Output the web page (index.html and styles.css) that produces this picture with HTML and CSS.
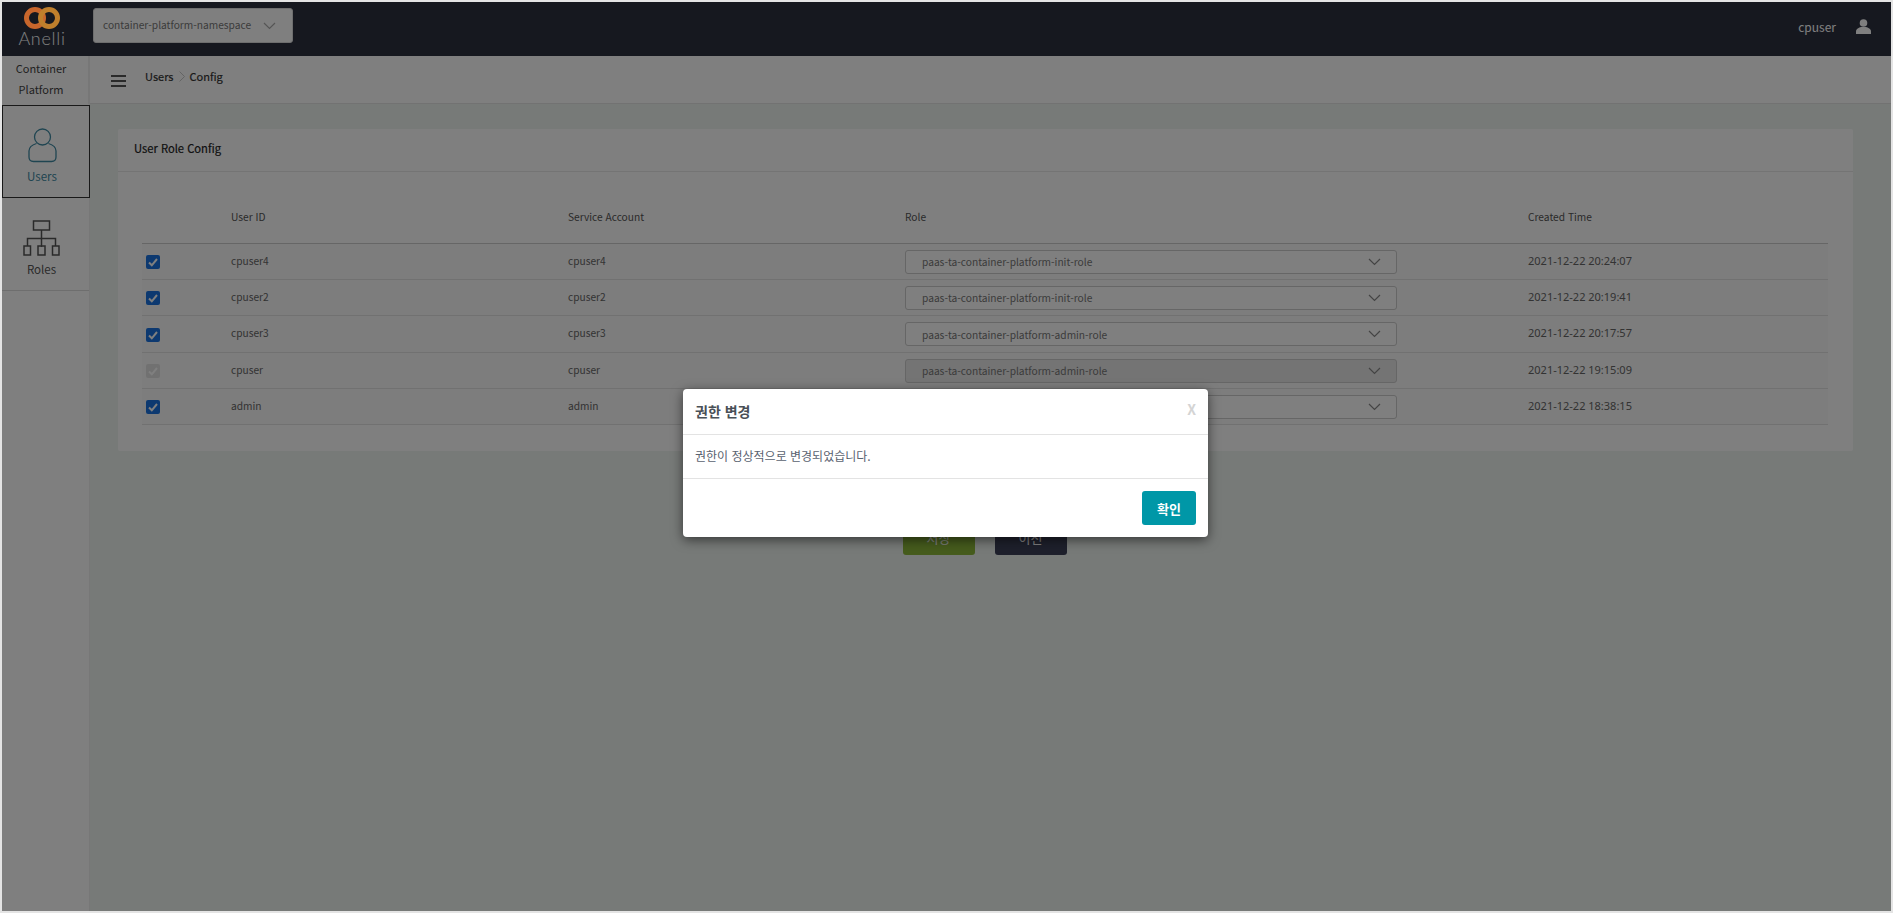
FILE: index.html
```html
<!DOCTYPE html>
<html lang="ko">
<head>
<meta charset="utf-8">
<title>User Role Config</title>
<link rel="stylesheet" href="styles.css">
</head>
<body>
<div class="frame">
  <header class="topbar">
    <div class="logo">
      <svg class="logo-rings" width="36" height="22" viewBox="0 0 36 22"><circle cx="11" cy="11" r="8.500" fill="none" stroke="#c8662c" stroke-width="5"/><circle cx="25" cy="11" r="8.500" fill="none" stroke="#bf7f2c" stroke-width="5"/></svg>
      <span class="logo-text">Anelli</span>
    </div>
    <div class="ns-select"><span>container-platform-namespace</span>
      <svg class="chev" width="13" height="8" viewBox="0 0 13 8"><path d="M1 1l5.500 5.500L12 1" fill="none" stroke="currentColor" stroke-width="1.200"/></svg>
    </div>
    <div class="user-box"><span>cpuser</span>
      <svg width="15" height="15" viewBox="0 0 15 15"><circle cx="7.500" cy="4" r="3.800" fill="#fff"/><path d="M0 15v-2.500C0 10 3 8.500 5 8h5c2 .5 5 2 5 4.500V15z" fill="#fff"/></svg>
    </div>
  </header>
  <div class="body-row">
    <aside class="sidebar">
      <div class="side-title">Container<br>Platform</div>
      <nav class="side-nav">
        <a class="side-item active">
          <svg width="29" height="35" viewBox="0 0 29 35"><circle cx="14.500" cy="9" r="8" fill="none" stroke="currentColor" stroke-width="1.300"/><path d="M8.500 15.500C3.500 17 1 19 1 23v6c0 3 2 4.500 4.500 4.500h18c2.500 0 4.500-1.500 4.500-4.500v-6c0-4-2.500-6-7.500-7.500" fill="none" stroke="currentColor" stroke-width="1.300"/></svg>
          <span>Users</span>
        </a>
        <a class="side-item">
          <svg width="37" height="36" viewBox="0 0 37 36"><path d="M10.500 1h16v9h-16zM18.500 10v17M4.500 26v-7.500h28V26M1 26h6.500v9H1zM15 26h7v9h-7zM29.500 26H36v9h-6.500z" fill="none" stroke="currentColor" stroke-width="1.500"/></svg>
          <span>Roles</span>
        </a>
      </nav>
    </aside>
    <div class="content">
      <div class="crumbbar">
        <div class="burger"><i></i><i></i><i></i></div>
        <span class="crumb">Users</span>
        <svg class="crumb-sep" width="6" height="11" viewBox="0 0 6 11"><path d="M.5.500l5 5-5 5" fill="none" stroke="#c8c8c8"/></svg>
        <span class="crumb">Config</span>
      </div>
      <main class="main">
        <section class="card">
          <h2 class="card-title">User Role Config</h2>
          <div class="card-body">
            <table class="grid">
              <colgroup><col class="c1"><col class="c2"><col class="c3"><col class="c4"><col></colgroup>
              <thead><tr><th></th><th>User ID</th><th>Service Account</th><th>Role</th><th>Created Time</th></tr></thead>
              <tbody>
                <tr><td class="box"><span class="chk"><svg width="14" height="14" viewBox="0 0 14 14"><path d="M3 7.500l2.800 2.800L11 4" fill="none" stroke="#fff" stroke-width="2"/></svg></span></td><td>cpuser4</td><td>cpuser4</td><td class="box"><div class="role"><span>paas-ta-container-platform-init-role</span><svg width="13" height="8" viewBox="0 0 13 8"><path d="M1 1l5.500 5.500L12 1" fill="none" stroke="#888" stroke-width="1.200"/></svg></div></td><td class="date">2021-12-22 20:24:07</td></tr>
                <tr><td class="box"><span class="chk"><svg width="14" height="14" viewBox="0 0 14 14"><path d="M3 7.500l2.800 2.800L11 4" fill="none" stroke="#fff" stroke-width="2"/></svg></span></td><td>cpuser2</td><td>cpuser2</td><td class="box"><div class="role"><span>paas-ta-container-platform-init-role</span><svg width="13" height="8" viewBox="0 0 13 8"><path d="M1 1l5.500 5.500L12 1" fill="none" stroke="#888" stroke-width="1.200"/></svg></div></td><td class="date">2021-12-22 20:19:41</td></tr>
                <tr class="tall"><td class="box"><span class="chk"><svg width="14" height="14" viewBox="0 0 14 14"><path d="M3 7.500l2.800 2.800L11 4" fill="none" stroke="#fff" stroke-width="2"/></svg></span></td><td>cpuser3</td><td>cpuser3</td><td class="box"><div class="role"><span>paas-ta-container-platform-admin-role</span><svg width="13" height="8" viewBox="0 0 13 8"><path d="M1 1l5.500 5.500L12 1" fill="none" stroke="#888" stroke-width="1.200"/></svg></div></td><td class="date">2021-12-22 20:17:57</td></tr>
                <tr><td class="box"><span class="chk off"><svg width="14" height="14" viewBox="0 0 14 14"><path d="M3 7.500l2.800 2.800L11 4" fill="none" stroke="#fff" stroke-width="2"/></svg></span></td><td>cpuser</td><td>cpuser</td><td class="box"><div class="role off"><span>paas-ta-container-platform-admin-role</span><svg width="13" height="8" viewBox="0 0 13 8"><path d="M1 1l5.500 5.500L12 1" fill="none" stroke="#888" stroke-width="1.200"/></svg></div></td><td class="date">2021-12-22 19:15:09</td></tr>
                <tr><td class="box"><span class="chk"><svg width="14" height="14" viewBox="0 0 14 14"><path d="M3 7.500l2.800 2.800L11 4" fill="none" stroke="#fff" stroke-width="2"/></svg></span></td><td>admin</td><td>admin</td><td class="box"><div class="role"><span>paas-ta-container-platform-admin-role</span><svg width="13" height="8" viewBox="0 0 13 8"><path d="M1 1l5.500 5.500L12 1" fill="none" stroke="#888" stroke-width="1.200"/></svg></div></td><td class="date">2021-12-22 18:38:15</td></tr>
              </tbody>
            </table>
          </div>
        </section>
        <div class="actions">
          <button class="btn save">저장</button>
          <button class="btn prev">이전</button>
        </div>
      </main>
    </div>
  </div>
  <div class="dim"></div>
  <div class="modal">
    <div class="modal-head"><h3>권한 변경</h3><span class="close">X</span></div>
    <div class="modal-body">권한이 정상적으로 변경되었습니다.</div>
    <div class="modal-foot"><button class="ok">확인</button></div>
  </div>
</div>
</body>
</html>
```
FILE: styles.css
```css
* { box-sizing: border-box; }
html, body { margin: 0; height: 100%; }
body {
  background: #e4e4e4;
  padding: 2px;
  font-family: "Noto Sans CJK KR", sans-serif;
  font-size: 10.200px;
  color: #666;
  overflow: hidden;
}
.frame { position: relative; height: 909px; display: flex; flex-direction: column; overflow: hidden; }
.topbar { height: 54px; background: #2c303e; display: flex; align-items: flex-start; flex: none; }
.logo { width: 80px; padding-top: 5px; margin-right: 8px; display: flex; flex-direction: column; align-items: center; }
.logo-rings { display: block; position: relative; z-index: 2; }
.logo-text { font-family: "Lato", sans-serif; font-weight: 300; font-size: 18px; line-height: 18px; letter-spacing: .7px; color: #fff; }
.ns-select { margin: 6px 0 0 3px; width: 200px; height: 35px; background: #fff; border: 1px solid #ddd; border-radius: 3px; padding: 0 16px 0 9px; display: flex; align-items: center; justify-content: space-between; color: #777; white-space: nowrap; }
.ns-select span { margin-top: -2px; }
.chev { color: #aaa; }
.user-box { margin-left: auto; margin-right: 20px; height: 48px; display: flex; align-items: center; gap: 20px; color: #fff; font-size: 12px; }
.body-row { flex: 1; display: flex; min-height: 0; }
.sidebar { width: 88px; flex: none; background: #fff; display: flex; flex-direction: column; border-right: 1px solid #eee; }
.side-title { height: 48px; padding: 2px 8px 0 0; text-align: center; font-size: 11px; line-height: 21px; color: #444; border-right: 1px solid #eee; }
.side-nav { display: flex; flex-direction: column; }
.side-item { height: 93px; display: flex; flex-direction: column; align-items: center; justify-content: flex-end; padding: 0 8px 13px 0; gap: 5px; font-size: 11.500px; color: #555; border-bottom: 1px solid #ddd; }
.side-item.active { margin: 1px -1px 0 0; border: 1px solid #333; color: #3f8aa3; }
.content { flex: 1; min-width: 0; display: flex; flex-direction: column; background: #eef4f1; }
.crumbbar { height: 48px; flex: none; background: #fff; border-bottom: 1px solid #e5e5e5; display: flex; align-items: center; padding: 0 0 7px 21px; font-size: 11px; color: #333; }
.burger { width: 15px; margin: 9px 19px 0 0; display: flex; flex-direction: column; gap: 3px; }
.burger i { display: block; height: 2px; background: #555; }
.crumb { -webkit-text-stroke: .2px #333; }
.crumb-sep { margin: 0 5px; }
.main { flex: 1; padding: 25px 38px 0 28px; }
.card { background: #fff; height: 322px; border-radius: 2px; }
.card-title { margin: 0; height: 43px; padding: 0 16px 4px; display: flex; align-items: center; font-size: 11.200px; font-weight: 400; color: #222; border-bottom: 1px solid #e8e8e8; -webkit-text-stroke: .2px #222; }
.card-body { padding: 18px 24px; }
.grid { width: 1686px; table-layout: fixed; border-collapse: separate; border-spacing: 0; }
.c1 { width: 89px; } .c2 { width: 337px; } .c3 { width: 337px; } .c4 { width: 623px; }
.grid th { height: 54px; text-align: left; font-weight: 400; color: #555; border-bottom: 1px solid #ccc; padding: 0; }
.grid td { height: 36px; padding: 0 0 3px; border-bottom: 1px solid #e2e2e2; color: #666; background: #fafafa; }
.grid tr.tall td { height: 37px; }
.grid td.box { padding: 0; }
.grid td.date { font: 11px "Noto Sans", sans-serif; }
.chk { display: block; width: 14px; height: 14px; margin: 1px 0 0 4px; background: #1a73e0; border-radius: 2px; }
.chk svg { display: block; }
.chk.off { background: #e2e2e2; }
.role { width: 492px; height: 24px; border: 1px solid #ccc; border-radius: 3px; background: #fff; display: flex; align-items: center; justify-content: space-between; padding: 0 15px 0 16px; color: #777; }
.role.off { background: #e9e9e9; }
.actions { display: flex; justify-content: center; gap: 20px; margin-top: 68px; padding-right: 2px; }
.btn { width: 72px; height: 36px; border: 0; border-radius: 3px; color: #fff; font: 13px "Noto Sans CJK KR", sans-serif; }
.btn.save { background: #8cb83a; }
.btn.prev { background: #3c4058; }
.dim { position: absolute; inset: 0; background: rgba(0, 0, 0, .5); }
.modal { position: absolute; left: 681px; top: 387px; width: 525px; height: 148px; background: #fff; border-radius: 4px; box-shadow: 0 3px 12px rgba(0, 0, 0, .55); display: flex; flex-direction: column; color: #596270; }
.modal-head { height: 46px; flex: none; display: flex; align-items: center; justify-content: space-between; padding: 0 12px 2px; border-bottom: 1px solid #e3e3e3; }
.modal-head h3 { margin: 0; font-size: 14px; font-weight: 700; color: #495057; }
.close { font-size: 14px; font-weight: 700; color: #d4d4d4; margin: -4px 0 0; }
.modal-body { height: 44px; flex: none; padding: 0 12px 2px; display: flex; align-items: center; font-size: 12px; border-bottom: 1px solid #e3e3e3; }
.modal-foot { flex: 1; display: flex; justify-content: flex-end; align-items: flex-start; padding: 12px 12px 0; }
.ok { width: 54px; height: 34px; border: 0; border-radius: 3px; background: #0097a7; color: #fff; font: 700 13px "Noto Sans CJK KR", sans-serif; }
```
